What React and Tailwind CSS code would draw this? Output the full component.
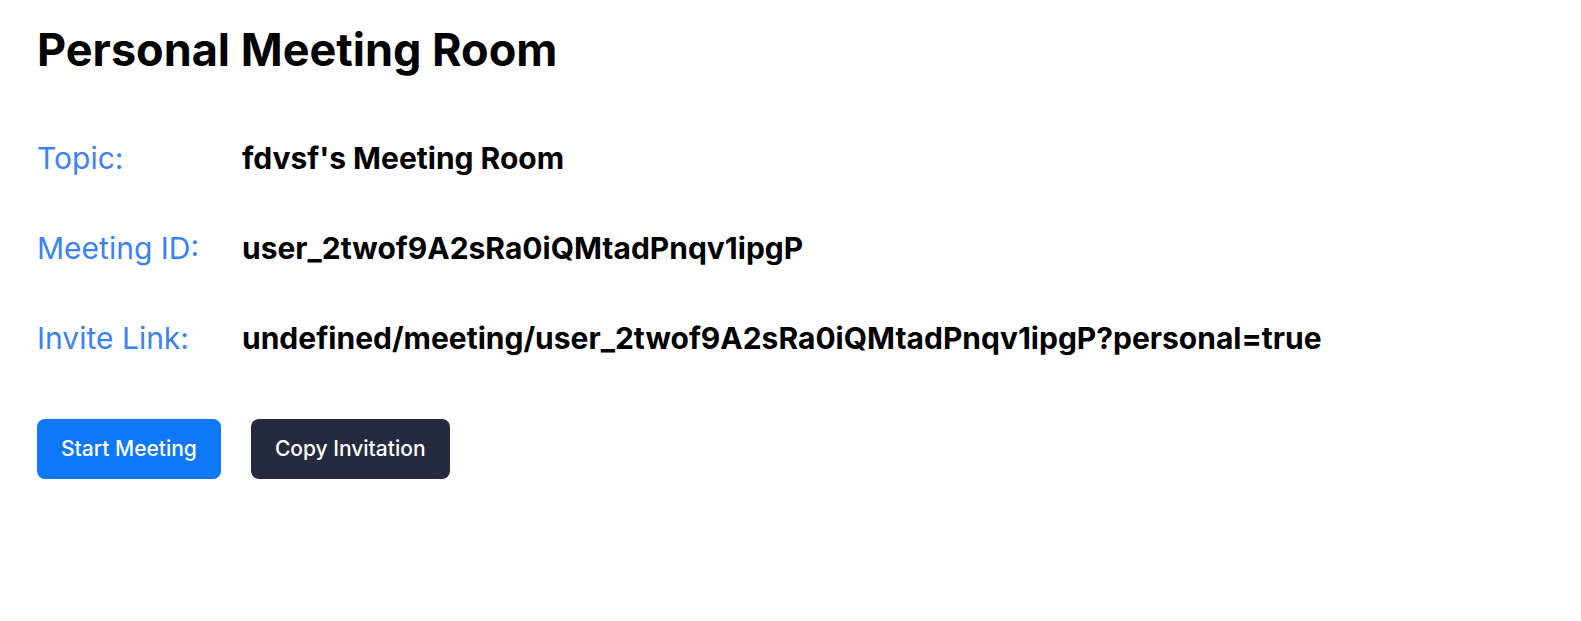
import React from 'react';

const rows = [
  { label: 'Topic:', value: "fdvsf's Meeting Room" },
  { label: 'Meeting ID:', value: 'user_2twof9A2sRa0iQMtadPnqv1ipgP' },
  { label: 'Invite Link:', value: 'undefined/meeting/user_2twof9A2sRa0iQMtadPnqv1ipgP?personal=true' },
];

export default function App() {
  return (
    <div className="min-h-screen bg-white font-['Inter',sans-serif] text-black px-[37px] pt-[25px]">
      <h1 className="text-[45px] leading-[50px] font-bold">Personal Meeting Room</h1>

      <div className="mt-[65px] flex flex-col gap-[54px]">
        {rows.map((row) => (
          <div key={row.label} className="flex items-center">
            <span className="w-[205px] shrink-0 text-3xl text-[#3b82f6]">{row.label}</span>
            <span className="text-3xl font-bold">{row.value}</span>
          </div>
        ))}
      </div>

      <div className="mt-[63px] flex gap-[30px]">
        <button className="h-[60px] px-6 rounded-lg bg-[#0e78f9] text-white text-[21px] font-medium">
          Start Meeting
        </button>
        <button className="h-[60px] px-6 rounded-lg bg-[#252a41] text-white text-[21px] font-medium">
          Copy Invitation
        </button>
      </div>
    </div>
  );
}
